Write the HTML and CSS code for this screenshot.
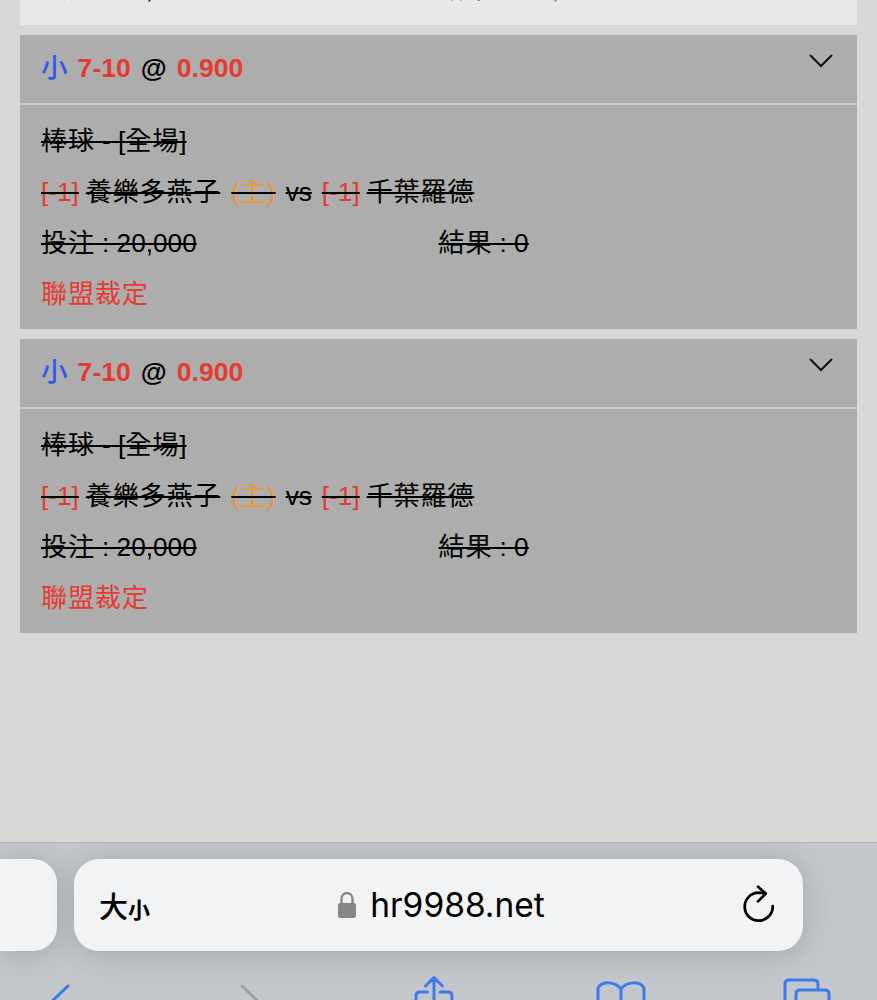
FILE: index.html
```html
<!DOCTYPE html>
<html lang="zh-Hant">
<head>
  <meta charset="UTF-8" />
  <meta name="viewport" content="width=device-width, initial-scale=1.0" />
  <title>投注記錄</title>
  <link rel="stylesheet" href="styles.css">
</head>
<body>
  <main class="bets">
    <section class="bet settled">
      <div class="bet-row columns">
        <div><span><b class="zh">投注</b> : 20,000</span></div>
        <div><span><b class="zh">結果</b> : </span><span class="red">-20,000</span></div>
      </div>
    </section>

    <section class="bet">
      <header class="bet-header">
        <h2><span class="blue">小</span> <span class="red">7-10</span> <span>@</span> <span class="red">0.900</span></h2>
        <svg class="chevron" viewBox="0 0 24 14"><path d="M1.5 1.5 L12 12 L22.5 1.5" /></svg>
      </header>
      <div class="bet-body">
        <div class="bet-row"><span class="strike"><b class="zh">棒球</b> - [<b class="zh">全場</b>]</span></div>
        <div class="bet-row teams">
          <span class="strike red">[-1]</span>
          <span class="strike zh name">養樂多燕子</span>
          <span class="strike orange">(<b class="zh">主</b>)</span>
          <span class="strike">vs</span>
          <span class="strike red">[-1]</span>
          <span class="strike zh name">千葉羅德</span>
        </div>
        <div class="bet-row columns">
          <div><span class="strike"><b class="zh">投注</b> : 20,000</span></div>
          <div><span class="strike"><b class="zh">結果</b> : 0</span></div>
        </div>
        <div class="bet-row"><span class="red zh">聯盟裁定</span></div>
      </div>
    </section>

    <section class="bet">
      <header class="bet-header">
        <h2><span class="blue">小</span> <span class="red">7-10</span> <span>@</span> <span class="red">0.900</span></h2>
        <svg class="chevron" viewBox="0 0 24 14"><path d="M1.5 1.5 L12 12 L22.5 1.5" /></svg>
      </header>
      <div class="bet-body">
        <div class="bet-row"><span class="strike"><b class="zh">棒球</b> - [<b class="zh">全場</b>]</span></div>
        <div class="bet-row teams">
          <span class="strike red">[-1]</span>
          <span class="strike zh name">養樂多燕子</span>
          <span class="strike orange">(<b class="zh">主</b>)</span>
          <span class="strike">vs</span>
          <span class="strike red">[-1]</span>
          <span class="strike zh name">千葉羅德</span>
        </div>
        <div class="bet-row columns">
          <div><span class="strike"><b class="zh">投注</b> : 20,000</span></div>
          <div><span class="strike"><b class="zh">結果</b> : 0</span></div>
        </div>
        <div class="bet-row"><span class="red zh">聯盟裁定</span></div>
      </div>
    </section>
  </main>

  <footer class="browser-bar">
    <div class="tabs">
      <div class="tab-prev"></div>
      <div class="address">
        <span class="text-size">大<small>小</small></span>
        <div class="url">
          <svg class="lock" viewBox="0 0 20 28"><path class="shackle" d="M4.5 13 V8 C4.5 0 15.5 0 15.5 8 V13" /><rect x="1" y="12" width="18" height="15" rx="2.5" /></svg>
          <span>hr9988.net</span>
        </div>
        <svg class="reload" viewBox="0 0 32 38"><path d="M29.7 21.2 A14 14 0 1 1 15.7 7.7 L22.5 8.4 M15 1.8 L22.8 8.6 L15 16.4" /></svg>
      </div>
    </div>
    <nav class="tools">
      <svg viewBox="0 0 28 44"><path d="M24 3 L4 22 L24 41" /></svg>
      <svg class="disabled" viewBox="0 0 28 44"><path d="M4 3 L24 22 L4 41" /></svg>
      <svg class="share" viewBox="0 0 42 48"><path d="M14.5 17 H7 Q3 17 3 21 V41 Q3 45 7 45 H35 Q39 45 39 41 V21 Q39 17 35 17 H27 M21 31 V3 M12.5 11 L21 2.5 L29.5 11" /></svg>
      <svg class="book" viewBox="0 0 52 44"><path d="M26 9 C20 1 7 1 3 8 V38 C9 33 20 33 26 39 C32 33 43 33 49 38 V8 C45 1 32 1 26 9 Z V39" /></svg>
      <svg class="windows" viewBox="0 0 48 46"><path d="M12 34 H6 Q2 34 2 30 V6 Q2 2 6 2 H31 Q35 2 35 6 V12 M17 12 H42 Q46 12 46 16 V40 Q46 44 42 44 H17 Q13 44 13 40 V16 Q13 12 17 12 Z" /></svg>
    </nav>
  </footer>
</body>
</html>
```
FILE: styles.css
```css
* {
  box-sizing: border-box;
}
body {
  margin: 0;
  height: 1000px;
  overflow: hidden;
  display: flex;
  flex-direction: column;
  background-color: #d8d8d8;
  color: #000;
  font-family: "Liberation Sans", "Noto Sans CJK TC", sans-serif;
  font-size: 26.2px;
}
.bets {
  height: 842px;
  padding: 0 20px;
}
.bet {
  margin-bottom: 10px;
  background-color: #adadad;
}
.bet.settled {
  height: 61px;
  margin-top: -36px;
  padding: 0 21px;
  background-color: #e9e9e9;
}
.bet-header {
  height: 70px;
  padding: 0 24px 0 21px;
  display: flex;
  justify-content: space-between;
  border-bottom: 2px solid #cbcbcb;
}
.bet-header h2 {
  margin: 0;
  display: flex;
  gap: 10px;
  font-size: 26.6px;
  line-height: 67px;
}
.bet-header .blue {
  font-weight: 500;
}
.chevron {
  width: 24px;
  height: 14px;
  margin-top: 19px;
  fill: none;
  stroke: #111;
  stroke-width: 2;
  stroke-linecap: round;
}
.bet-body {
  padding: 11px 21px 9px;
}
.bet-row {
  height: 51px;
  line-height: 51px;
  white-space: nowrap;
}
.teams {
  display: flex;
}
.teams .name {
  margin: 0 11px 0 7px;
}
.teams .orange {
  margin-right: 10px;
}
.teams .orange + .strike {
  margin-right: 10px;
}
.columns {
  display: grid;
  grid-template-columns: 1fr 1fr;
}
.strike {
  text-decoration: line-through #000 2px;
}
.zh {
  font-weight: normal;
  letter-spacing: 0.7px;
}
.red {
  color: #e63a31;
}
.orange {
  color: #f0953a;
}
.blue {
  color: #2f59e8;
}

/* Browser toolbar */
.browser-bar {
  height: 158px;
  flex-shrink: 0;
  border-top: 1px solid #b1b4b7;
  background-color: #c3c6ca;
  overflow: hidden;
}
.tabs {
  display: flex;
  gap: 17px;
  padding-top: 16px;
}
.tab-prev,
.address {
  height: 92px;
  background-color: #f2f3f5;
  box-shadow: 0 3px 28px rgba(60, 60, 70, 0.22);
}
.tab-prev {
  width: 57px;
  border-radius: 0 24px 24px 0;
}
.address {
  width: 729px;
  padding: 0 28px 0 25px;
  display: grid;
  grid-template-columns: 1fr auto 1fr;
  align-items: center;
  border-radius: 25px;
}
.text-size {
  font-family: "Noto Sans CJK TC", sans-serif;
  font-size: 29px;
  font-weight: 500;
}
.text-size small {
  font-size: 22px;
  font-weight: bold;
}
.url {
  display: flex;
  align-items: center;
  gap: 13px;
  padding-left: 8px;
  font-family: Inter, sans-serif;
  font-size: 33.5px;
}
.lock {
  width: 20px;
  height: 28px;
  fill: #858688;
}
.lock .shackle {
  fill: none;
  stroke: #858688;
  stroke-width: 2.4;
}
.reload {
  width: 32px;
  height: 38px;
  justify-self: end;
  margin-top: -2px;
  fill: none;
  stroke: #000;
  stroke-width: 2.7;
  stroke-linecap: round;
  stroke-linejoin: round;
}
.tools {
  display: flex;
  padding: 24px 0 0 44px;
}
.tools svg {
  width: 28px;
  height: 44px;
  margin-top: 8px;
  flex-shrink: 0;
  fill: none;
  stroke: #3c7bea;
  stroke-width: 3;
  stroke-linecap: round;
  stroke-linejoin: round;
}
.tools .disabled {
  margin-left: 166px;
  stroke: #9da0a3;
}
.tools .share {
  width: 42px;
  height: 48px;
  margin: 0 0 0 147px;
}
.tools .book {
  width: 52px;
  margin: 5px 0 0 140px;
}
.tools .windows {
  width: 48px;
  height: 46px;
  margin: 3px 0 0 136px;
}
```
